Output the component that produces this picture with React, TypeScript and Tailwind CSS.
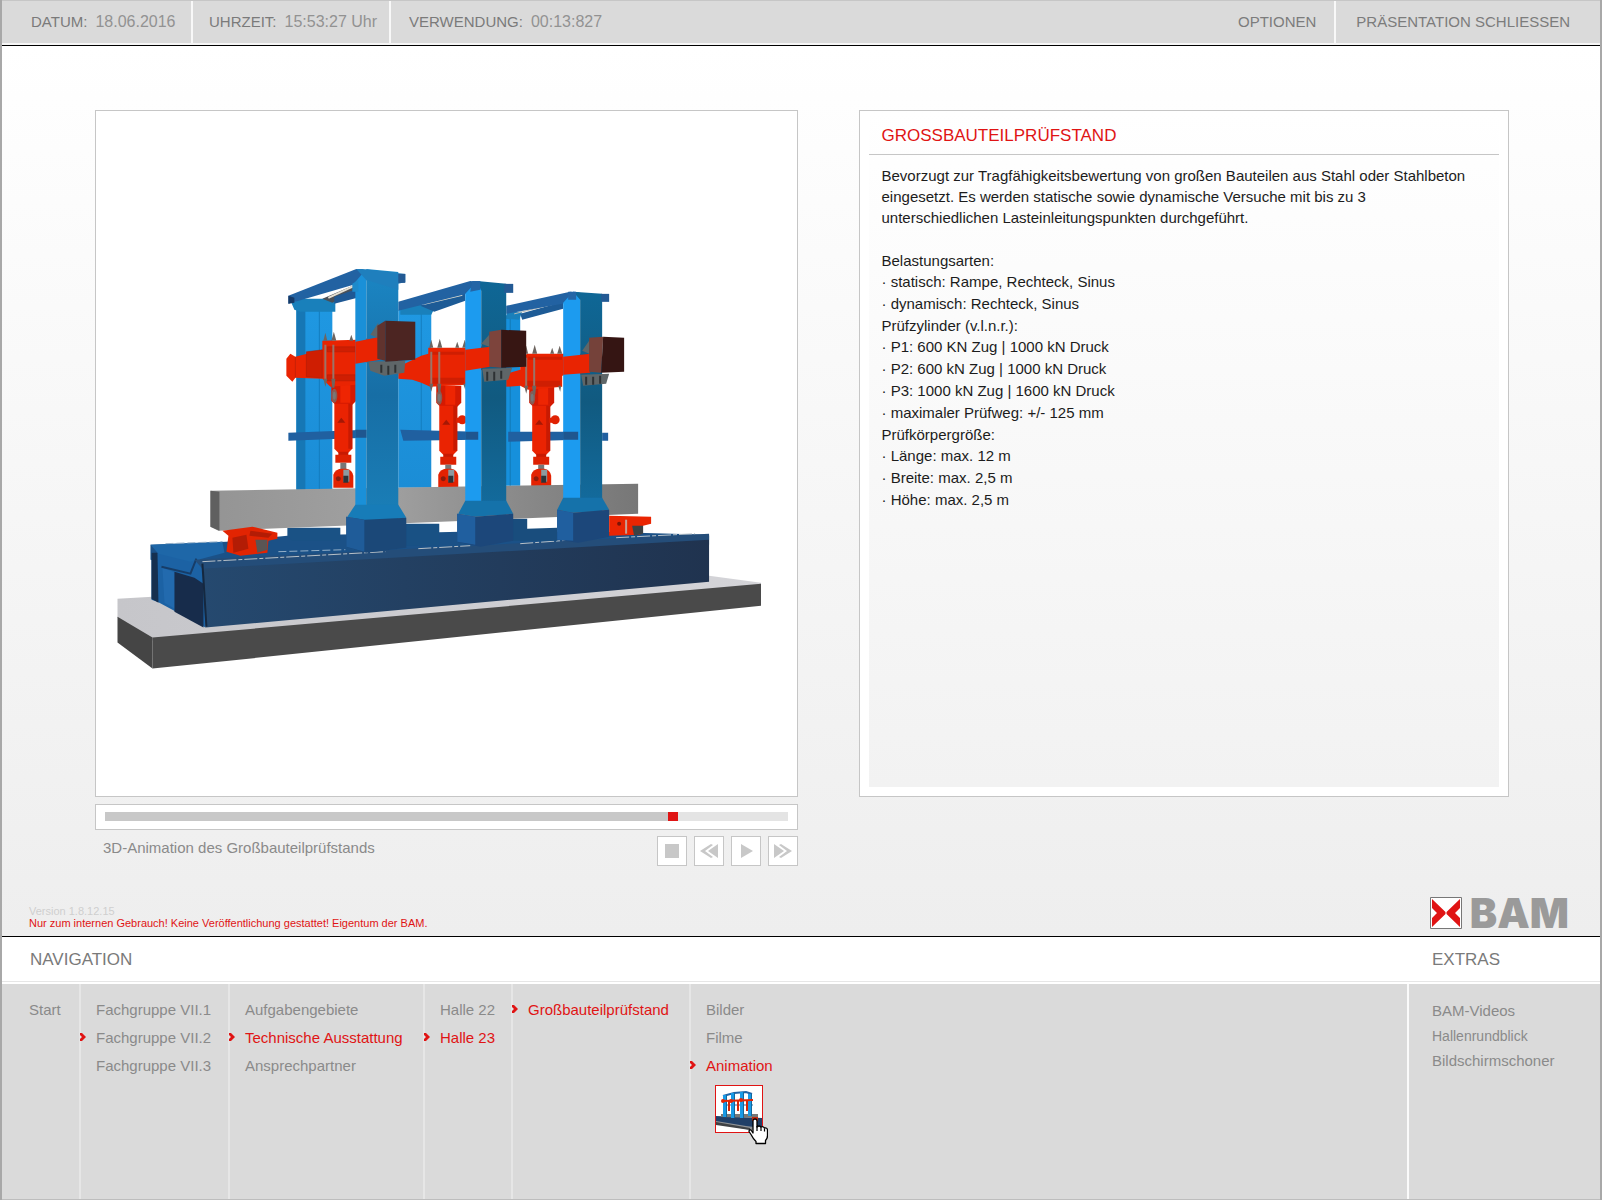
import { useState } from 'react';
import type { ReactNode } from 'react';
import clsx from 'clsx';

interface NavItem {
	label: string;
	selected?: boolean;
	marked?: boolean;
}

interface NavColumn {
	width: string;
	items: NavItem[];
}

const columns: NavColumn[] = [
	{
		width: 'w-[149px]',
		items: [{ label: 'Fachgruppe VII.1' }, { label: 'Fachgruppe VII.2', marked: true }, { label: 'Fachgruppe VII.3' }],
	},
	{
		width: 'w-[195px]',
		items: [{ label: 'Aufgabengebiete' }, { label: 'Technische Ausstattung', marked: true, selected: true }, { label: 'Ansprechpartner' }],
	},
	{ width: 'w-[88px]', items: [{ label: 'Halle 22' }, { label: 'Halle 23', marked: true, selected: true }] },
	{ width: 'w-[178px]', items: [{ label: 'Großbauteilprüfstand', marked: true, selected: true }] },
];

const media: NavItem[] = [{ label: 'Bilder' }, { label: 'Filme' }, { label: 'Animation', marked: true, selected: true }];

const specs = [
	{ title: 'Belastungsarten:', lines: ['statisch: Rampe, Rechteck, Sinus', 'dynamisch: Rechteck, Sinus'] },
	{
		title: 'Prüfzylinder (v.l.n.r.):',
		lines: ['P1: 600 KN Zug | 1000 kN Druck', 'P2: 600 kN Zug | 1000 kN Druck', 'P3: 1000 kN Zug | 1600 kN Druck', 'maximaler Prüfweg: +/- 125 mm'],
	},
	{ title: 'Prüfkörpergröße:', lines: ['Länge: max. 12 m', 'Breite: max. 2,5 m', 'Höhe: max. 2,5 m'] },
];

const Status = ({ label, value, className }: { label: string; value: string; className?: string }) => (
	<div className={clsx('flex items-center gap-2 border-r-2', className)}>
		<span className="text-[#7a7a7a]">{label}</span>
		<span className="text-base text-[#929292]">{value}</span>
	</div>
);

const Header = () => (
	<header className="flex h-[46px] items-stretch border-t border-b border-t-[#c6c6c6] border-b-black bg-[#dadada] text-[15px] text-[#7c7c7c]">
		<div className="flex flex-1 border-b-2 border-[#f6f6f6]">
			<Status label="DATUM:" value="18.06.2016" className="w-[191px] border-[#f8f8f8] pl-[29px]" />
			<Status label="UHRZEIT:" value="15:53:27 Uhr" className="w-[198px] border-[#f8f8f8] pl-4" />
			<Status label="VERWENDUNG:" value="00:13:827" className="border-transparent pl-[18px]" />
			<button type="button" className="ml-auto border-r-2 border-[#f8f8f8] px-[18px] pt-px">
				OPTIONEN
			</button>
			<button type="button" className="pt-px pr-[30px] pl-5">
				PRÄSENTATION SCHLIESSEN
			</button>
		</div>
	</header>
);

const Cylinder = ({ x, top, knob }: { x: number; top: number; knob?: boolean }) => (
	<g>
		<path d={`M${x - 12} ${top}h25v17l-4 4h-17l-4-4z`} fill="#d41a02" />
		<path d={`M${x - 3} ${top}h10v19h-10z`} fill="#ee2502" />
		<ellipse cx={x - 9} cy={top + 12} rx="3" ry="7" fill="#8a5a52" />
		<ellipse cx={x - 9} cy={top + 12} rx="1.5" ry="4" fill="#777" />
		<path d={`M${x - 9} ${top + 20}h18v45l-4 4h-10l-4-4z`} fill="#ea2302" />
		<path d={`M${x + 5} ${top + 20}h4v45h-4z`} fill="#c81a02" />
		<path d={`M${x - 6} ${top + 39}l4-5 4 5z`} fill="#a51805" />
		{knob && (
			<g fill="#e02102">
				<path d={`M${x + 8} ${top + 32}h5v5h-5z`} />
				<circle cx={x + 14} cy={top + 34} r="4.5" />
			</g>
		)}
		<path d={`M${x - 5} ${top + 68}h10v4h-10z`} fill="#c81a02" />
		<path d={`M${x - 8} ${top + 71}h16v8h-16z`} fill="#dd2102" />
		<path d={`M${x - 3} ${top + 79}h6v7h-6z`} fill="#777" />
		<path d={`M${x - 10} 488v-13q2-6 9-6h4q6 1 7 7v12z`} fill="#e32202" />
		<path d={`M${x} 470h6v12h-6z`} fill="#8c9aa0" />
		<path d={`M${x} 476h5v7h-5z`} fill="#2d3338" />
		<circle cx={x - 5} cy="479" r="2.5" fill="#8b1c0c" />
	</g>
);

const Bolts = ({ x, y, bottom }: { x: number; y: number; bottom: number }) => (
	<g>
		<g fill="#6d6560">
			<path d={`M${x} ${y}l2-8 2 8zM${x + 8} ${y}l2.500-9 2.500 9zM${x + 26} ${y}l2-6 2 6zM${x + 33} ${y}l2.500-8 2.500 8z`} />
			<path d={`M${x} ${bottom}h4l-2 8zM${x + 8} ${bottom}h4l-1 9h-2zM${x + 34} ${bottom}h3l-1 6z`} />
		</g>
		<path d={`M${x + 2} ${y + 4}V${bottom}M${x + 10} ${y + 4}V${bottom}`} stroke="#9a7468" strokeWidth="2" />
	</g>
);

const TestRig = () => (
	<svg viewBox="96 111 700 685" className="block h-full w-full" role="img" aria-label="Großbauteilprüfstand">
		<defs>
			<linearGradient id="slab" x1="0" x2="1">
				<stop offset="0" stopColor="#c6c6ca" />
				<stop offset="1" stopColor="#d4d4d8" />
			</linearGradient>
			<linearGradient id="base" x1="0" x2="1">
				<stop offset="0" stopColor="#25496f" />
				<stop offset="0.4" stopColor="#234062" />
				<stop offset="1" stopColor="#20334f" />
			</linearGradient>
			<linearGradient id="beam" x1="0" x2="1">
				<stop offset="0" stopColor="#949494" />
				<stop offset="0.4" stopColor="#a1a1a1" />
				<stop offset="0.7" stopColor="#8b8b8b" />
				<stop offset="1" stopColor="#777" />
			</linearGradient>
			<linearGradient id="front" x1="0" y1="0" x2="0" y2="1">
				<stop offset="0" stopColor="#1b86c4" />
				<stop offset="0.5" stopColor="#176ea5" />
				<stop offset="1" stopColor="#1a7fb8" />
			</linearGradient>
			<linearGradient id="shade" x1="0" y1="0" x2="0" y2="1">
				<stop offset="0" stopColor="#0f6796" />
				<stop offset="0.5" stopColor="#115a80" />
				<stop offset="1" stopColor="#136c9f" />
			</linearGradient>
			<linearGradient id="rear" x1="0" y1="0" x2="0" y2="1">
				<stop offset="0" stopColor="#1f98e2" />
				<stop offset="1" stopColor="#1b8dd6" />
			</linearGradient>
		</defs>

		{/* concrete slab */}
		<path d="M117 599L152 597 709 576 761 583 761 586 152 641 117 618z" fill="url(#slab)" />
		<path d="M117 617L152 638V669L117 643z" fill="#454545" />
		<path d="M152 638L761 584V606L152 669z" fill="#4a4a4a" />

		{/* steel bed */}
		<path d="M150 545L226 542 287 536 460 532 600 532 709 535 709 545 205 572 150 560z" fill="#1b5187" />
		<path d="M151 553L196 556 205 566V628L157 602 151 600z" fill="#1c62a4" />
		<path d="M151 553h6l1 50-7-4z" fill="#16304f" />
		<path d="M150 545L222 542 224 553 190 562 158 554z" fill="#1e67a8" />
		<path d="M162 568L178 574V611L164 603z" fill="#226aae" />
		<path d="M174 572L194 578 203 584V628L174 612z" fill="#172c4b" />
		<path d="M161 567L190 574 196 559" fill="none" stroke="#173d68" strokeWidth="2" />
		<path d="M202 563L709 536V582L205 628z" fill="url(#base)" />
		<path d="M194 560L709 534V540L202 569z" fill="#244d79" />
		<path d="M202 562L385 552M418 549L470 546M520 544L575 540M616 538L695 534" stroke="#b8c1c8" strokeWidth="1" strokeDasharray="13 2 4 2" />
		<path d="M165 544L222 542M278 552L345 550" stroke="#93afc8" strokeDasharray="8 3" />
		<path d="M202 564L206 627" stroke="#15283f" strokeWidth="2" />

		{/* rear footings */}
		<path d="M287 528H340V541H292l-5-5z" fill="#1a5285" />
		<path d="M392 524H439V546H392z" fill="#195184" />
		<path d="M505 519H527V529L557 528V541H510z" fill="#194d7d" />

		{/* rear columns */}
		<path d="M296 300H332V490H296z" fill="url(#rear)" />
		<path d="M296 300H305V490H296z" fill="#1677b5" />
		<path d="M319 300V490" stroke="#147dbf" />
		<path d="M398 310H431V488H398z" fill="url(#rear)" />
		<path d="M421 310V440" stroke="#147dbf" />
		<path d="M505 316H520V486H505z" fill="#1690dc" />
		<path d="M510 316V486" stroke="#1179b5" />
		<path d="M291 303l10-4h34v13h-35l-6-2zM400 309l8-4h28l-5 10h-31zM505 319l2-7h15l-3 8z" fill="#1980bb" />

		{/* head beams */}
		<path d="M322 299L357 284V291L332 303z" fill="#4a5058" />
		<path d="M328 298L354 286" stroke="#e6e0d2" strokeWidth="2" />
		<path d="M334 297L357 289V298L334 304z" fill="#1f5894" />
		<path d="M288 296L356 269 366 270V281L288 304z" fill="#2262a2" />
		<path d="M288 296L294 298V303L288 304z" fill="#153966" />
		<path d="M420 306L465 290V301L434 312z" fill="#1d5b96" />
		<path d="M424 304L462 295" stroke="#dfdccf" strokeWidth="2" />
		<path d="M398 302L470 281 479 282V291L398 311z" fill="#2262a2" />
		<path d="M520 314L563 302V309L522 320z" fill="#1d5b96" />
		<path d="M514 314L563 302" stroke="#b9bbb6" />
		<path d="M506 306L570 292 579 293V301L506 314z" fill="#2262a2" />

		{/* cross ties */}
		<g fill="#2060a0">
			<path d="M288 433L366 430V438L288 441zM400 430L478 432V440L403 441zM508 432H578V440L508 442zM602 433H608V441H602z" />
		</g>

		{/* load cylinders */}
		<Cylinder x={343} top={384} />
		<Cylinder x={448} top={386} knob />
		<Cylinder x={541} top={386} knob />

		{/* test specimen */}
		<path d="M210 491L638 484V514L218 531 210 527z" fill="url(#beam)" />
		<path d="M210 491L219 492V531L210 527z" fill="#606060" />

		{/* red traverses */}
		<path d="M286 359L290 354 295 357 322 350V341L357 340 380 337V361L356 364V385L330 387 322 379 295 378 292 382 286 376z" fill="#e92402" />
		<path d="M306 352L322 350V378L306 377zM327 347h28v5h-28zM327 375h28v6h-28zM295 357v21" fill="#cf1e02" stroke="#a81e0a" strokeWidth="0.5" />
		<Bolts x={323} y={341} bottom={379} />
		<path d="M398 367L421 356 428 354V348L466 348 490 346V369L466 373V385L430 387 421 383 412 380 398 379z" fill="#e92402" />
		<path d="M430 352h34v3h-34zM430 378h34v6h-34z" fill="#cf1e02" />
		<Bolts x={429} y={348} bottom={384} />
		<path d="M506 374L520 370V359L527 354 563 354 590 354V374L562 376V387L528 390 520 386 506 387z" fill="#e92402" />
		<path d="M528 357h34v3h-34zM526 381h34v6h-34z" fill="#cf1e02" />
		<Bolts x={524} y={354} bottom={386} />

		{/* front columns */}
		<path d="M355 282L366 269V522H355z" fill="#1a90d8" />
		<path d="M366 269L398 272V522H366z" fill="url(#front)" />
		<path d="M352 284l6-4v12h-6z" fill="#1d8acb" />
		<path d="M356 269L362 269 405 274V282L398 284V290L366 280z" fill="#1f7fbd" />
		<path d="M398 274h7v9h-7z" fill="#235a94" />
		<path d="M465 294L477 281 481 282V515H465z" fill="#1c9bef" />
		<path d="M477 281L506 284V515H481V291z" fill="url(#shade)" />
		<path d="M504 284h9v9h-9z" fill="#235a94" />
		<path d="M563 303L573 292 580 293V512H563z" fill="#1c9bef" />
		<path d="M573 292L602 294V512H580V300z" fill="url(#shade)" />
		<path d="M601 294h8v8h-8z" fill="#235a94" />
		<path d="M472 281L480 281V290L470 292zM568 292h8v8h-8z" fill="#2465a6" />
		<path d="M355 430H366V438H355zM465 432H478V440H465zM563 432H578V440H563z" fill="#1f568f" />
		<path d="M355 342L380 337V360L355 364z" fill="#e92402" />
		<path d="M465 350L490 347V367L465 371z" fill="#e92402" />
		<path d="M563 357L590 354V373L563 375z" fill="#e92402" />

		{/* flared feet */}
		<path d="M355 505L347 517 364 521 406 518 398 505z" fill="#177cb8" />
		<path d="M346 517L364 520 406 518V548L366 553 346 547z" fill="#1b4878" />
		<path d="M346 517L364 520V552L346 547z" fill="#1f5c99" />
		<path d="M465 501L458 514 475 517 513 514 506 501z" fill="#1572aa" />
		<path d="M457 514L475 517 513 514V541L480 547 457 542z" fill="#1c477a" />
		<path d="M457 514L475 517V545L457 542z" fill="#205f9f" />
		<path d="M563 498L557 510 573 513 609 510 602 498z" fill="#1572aa" />
		<path d="M557 510L573 513 609 510V537L578 543 557 540z" fill="#1c477a" />
		<path d="M557 510L573 513V541L557 540z" fill="#205f9f" />

		{/* drive housings */}
		<g fill="#5f6668">
			<path d="M368 362L405 361 404 373 384 376 370 371zM482 369L512 368 508 380 484 382zM581 375L609 374 606 384 583 386z" />
			<path d="M370 335l8-12v15zM481 344l8-9v12zM582 351l7-10v13z" />
		</g>
		<path d="M381 365v8M388 366v9M395 365v8M487 372v9M494 372v9M501 371v8M586 377v8M593 377v8M600 376v8" stroke="#2e3234" strokeWidth="2" />
		<path d="M377 326L385 321V361L377 359z" fill="#60332e" />
		<path d="M385 321L415 322V360L385 362z" fill="#4c2522" />
		<path d="M489 332L501 330V368L489 367z" fill="#7d443c" />
		<path d="M501 330L526 331V367L501 368z" fill="#371613" />
		<path d="M589 338L603 337 601 373 589 372z" fill="#75423a" />
		<path d="M603 337L624 338V372L601 373z" fill="#351513" />

		{/* supports of the specimen */}
		<path d="M222 531L252 527 277 533V539L268 541 267 553 240 556 226 552 228 536z" fill="#e22402" />
		<path d="M232 538l14-3 2 14-15 4zM250 531l22 3-4 4-19-2z" fill="#b31c05" />
		<path d="M255 540h12v10l-10 3z" fill="#5a5554" />
		<path d="M609 516L651 517V524L643 526 640 535 609 536z" fill="#ea2502" />
		<path d="M632 526h11v8l-9 2z" fill="#3d4244" />
		<path d="M626 520v14" stroke="#c7a197" strokeWidth="2" />
		<circle cx="619" cy="524" r="2" fill="#7a1508" />
	</svg>
);

const Thumbnail = () => (
	<svg viewBox="0 0 46 46" className="block h-full w-full" aria-hidden="true">
		<path d="M0 33L46 38V43L34 44 0 37z" fill="#8e9296" />
		<path d="M0 36L34 42V44L0 39z" fill="#3f4245" />
		<path d="M0 30L46 32V42L30 40 0 35z" fill="#203f67" />
		<path d="M5 28H42V32L5 31z" fill="#777" />
		<path d="M7 10L18 7 30 6 36 8" fill="none" stroke="#1f65a8" strokeWidth="2" />
		<path d="M7 19h30" stroke="#2467a5" />
		<path d="M7 9h4v22H7zM15 7h4v25h-4zM24 6h4v26h-4zM32 8h4v22h-4z" fill="#199ae6" />
		<path d="M10 9h1v22h-1zM18 7h1v25h-1zM27 6h1v26h-1zM35 8h1v22h-1z" fill="#12689c" />
		<path d="M7 15L37 14" stroke="#e42505" strokeWidth="2" />
		<path d="M13 15v10M22 14v11M31 14v11" stroke="#d92405" strokeWidth="2" />
		<circle cx="7" cy="15" r="2" fill="#e42505" />
		<circle cx="15" cy="15" r="2" fill="#e42505" />
		<circle cx="25" cy="14" r="2" fill="#e42505" />
		<path d="M36 31h6v4h-6z" fill="#c52a10" />
	</svg>
);

const HandCursor = () => (
	<svg viewBox="0 0 20 27" className="absolute top-8 left-8 h-[27px] w-5" aria-hidden="true">
		<path
			d="M5 15V3q0-2 2-2t2 2v6q2-2 4 0 2-1 3.500 1 3-.5 3 2.500v5q0 3-2 5v3H8v-2q-3-3-5-7l-2-3q0-2 2-1.500z"
			fill="#fff"
			stroke="#000"
			strokeWidth="1.300"
			strokeLinejoin="round"
		/>
		<path d="M9 8v5M13 9v4M16.500 10.500v3" stroke="#000" strokeWidth="1.200" />
	</svg>
);

const ControlButton = ({ label, children }: { label: string; children: ReactNode }) => (
	<button type="button" aria-label={label} className="size-[30px] border border-[#c6c6c6] bg-white">
		<svg viewBox="0 0 28 28" className="size-7" fill="#c8c8c8">
			{children}
		</svg>
	</button>
);

const Player = () => {
	const [position, setPosition] = useState(837);
	const filled = position / 10;

	return (
		<div className="mt-[7px]">
			<div className="flex h-[26px] items-center border border-[#c6c6c6] bg-white px-[9px]">
				<input
					type="range"
					aria-label="Position"
					min={0}
					max={1000}
					value={position}
					onChange={(e) => setPosition(Number(e.target.value))}
					style={{ backgroundImage: `linear-gradient(to right, #c8c8c8 ${filled}%, #e4e4e4 ${filled}%)` }}
					className="h-[9px] w-full appearance-none [&::-webkit-slider-thumb]:h-[9px] [&::-webkit-slider-thumb]:w-[10px] [&::-webkit-slider-thumb]:appearance-none [&::-webkit-slider-thumb]:bg-[#e01414]"
				/>
			</div>
			<div className="mt-[6px] flex items-start justify-between pl-2">
				<p className="pt-[2px] text-[15px] leading-5 text-[#8a8a8a]">3D-Animation des Großbauteilprüfstands</p>
				<div className="flex gap-[7px]">
					<ControlButton label="Stopp">
						<path d="M7 7h14v14H7z" />
					</ControlButton>
					<ControlButton label="Zurück">
						<path d="M23 7v14l-10-7zM16 7l2 1-8 6 8 6-2 1L5 14z" />
					</ControlButton>
					<ControlButton label="Abspielen">
						<path d="M9 7l12 7-12 7z" />
					</ControlButton>
					<ControlButton label="Vor">
						<path d="M5 7v14l10-7zM12 7l-2 1 8 6-8 6 2 1 11-7z" />
					</ControlButton>
				</div>
			</div>
		</div>
	);
};

const Description = () => (
	<section className="flex border border-[#c6c6c6] bg-white px-[9px] pb-[9px]">
		<div className="flex-1 bg-linear-to-b from-white to-[#f2f2f2]">
			<h1 className="border-b border-[#c6c6c6] pt-[15px] pb-[8px] pl-[13px] text-[17px] leading-5 text-[#e01414]">GROSSBAUTEILPRÜFSTAND</h1>
			<div className="px-[13px] pt-[10px] text-[15px] leading-[21px] text-[#1c1c1c]">
				<p className="mb-[22px] max-w-[600px]">
					Bevorzugt zur Tragfähigkeitsbewertung von großen Bauteilen aus Stahl oder Stahlbeton eingesetzt. Es werden statische sowie dynamische Versuche mit bis zu 3
					unterschiedlichen Lasteinleitungspunkten durchgeführt.
				</p>
				{specs.map(({ title, lines }) => (
					<div key={title}>
						<h2>{title}</h2>
						<ul className="leading-[22px]">
							{lines.map((line) => (
								<li key={line}>· {line}</li>
							))}
						</ul>
					</div>
				))}
			</div>
		</div>
	</section>
);

const Logo = () => (
	<div className="flex items-center gap-2">
		<svg viewBox="0 0 32 32" className="size-8" aria-hidden="true">
			<path d="M.5.500h31v31H.5z" fill="#fff" stroke="#777" />
			<path d="M2 2L15.500 15v2L2 30V21l5-5-5-5zM30 2L16.500 15v2L30 30V21l-5-5 5-5z" fill="#e01414" />
		</svg>
		<span className="font-['Inter'] text-[41px] leading-8 font-black text-[#9a9a9a]">BAM</span>
	</div>
);

const NavLink = ({ label, marked, selected }: NavItem) => (
	<li className="relative">
		{marked && (
			<svg viewBox="0 0 6 8" className="absolute top-[9px] -left-px h-2 w-[6px]" aria-hidden="true">
				<path d="M0 0h2L6 4 2 8H0V6l2-2-2-2z" fill="#e01414" />
			</svg>
		)}
		<a href="#" className={clsx('block pl-[15px] leading-7 whitespace-nowrap', selected ? 'text-[#e01414]' : 'text-[#8a8a8a]')}>
			{label}
		</a>
	</li>
);

const Navigation = () => (
	<div className="border-t border-black bg-white">
		<div className="flex h-[45px] items-center border-b border-[#e6e6e6] pt-px text-[17px] text-[#7a7a7a]">
			<h2 className="flex-1 pl-7">NAVIGATION</h2>
			<h2 className="w-[168px]">EXTRAS</h2>
		</div>
		<div className="mt-[2px] flex min-h-[216px] border-b border-[#bdbdbd] bg-[#dadada] text-[15px]">
			<nav className="flex flex-1">
				<a href="#" className="w-[77px] pt-3 pl-[27px] leading-7 text-[#8a8a8a]">
					Start
				</a>
				{columns.map(({ width, items }) => (
					<ul key={items[0].label} className={clsx('border-l-2 border-[#e6e6e6] pt-3', width)}>
						{items.map((item) => (
							<NavLink key={item.label} {...item} />
						))}
					</ul>
				))}
				<div className="border-l-2 border-[#e6e6e6] pt-3">
					<ul>
						{media.map((item) => (
							<NavLink key={item.label} {...item} />
						))}
					</ul>
					<a href="#" aria-label="3D-Animation des Großbauteilprüfstands" className="relative mt-[5px] ml-6 block size-12 border border-[#e01414] bg-white">
						<Thumbnail />
						<HandCursor />
					</a>
				</div>
			</nav>
			<ul className="w-[193px] border-l-2 border-[#fafafa] pt-[14px] pl-[23px] leading-[25px] text-[#8a8a8a]">
				<li>
					<a href="#">BAM-Videos</a>
				</li>
				<li>
					<a href="#" className="text-sm">
						Hallenrundblick
					</a>
				</li>
				<li>
					<a href="#">Bildschirmschoner</a>
				</li>
			</ul>
		</div>
	</div>
);

const App = () => (
	<div className="flex min-h-screen flex-col border-x-2 border-[#a8a8a8] font-['Liberation_Sans',Arial,sans-serif]">
		<Header />
		<main className="flex flex-1 flex-col bg-linear-to-b from-white to-[#eeeeee]">
			<div className="grid grid-cols-[702fr_650fr] gap-x-[61px] pt-16 pr-[91px] pl-[93px]">
				<div className="aspect-[702/686] border border-[#c6c6c6] bg-white">
					<TestRig />
				</div>
				<Description />
				<Player />
			</div>
			<footer className="mt-auto flex items-end justify-between pr-[31px] pb-[7px] pl-[27px]">
				<div className="text-[11px] leading-3">
					<p className="text-[#cfcfcf]">Version 1.8.12.15</p>
					<p className="text-[#e01414]">Nur zum internen Gebrauch! Keine Veröffentlichung gestattet! Eigentum der BAM.</p>
				</div>
				<Logo />
			</footer>
		</main>
		<Navigation />
	</div>
);

export default App;
